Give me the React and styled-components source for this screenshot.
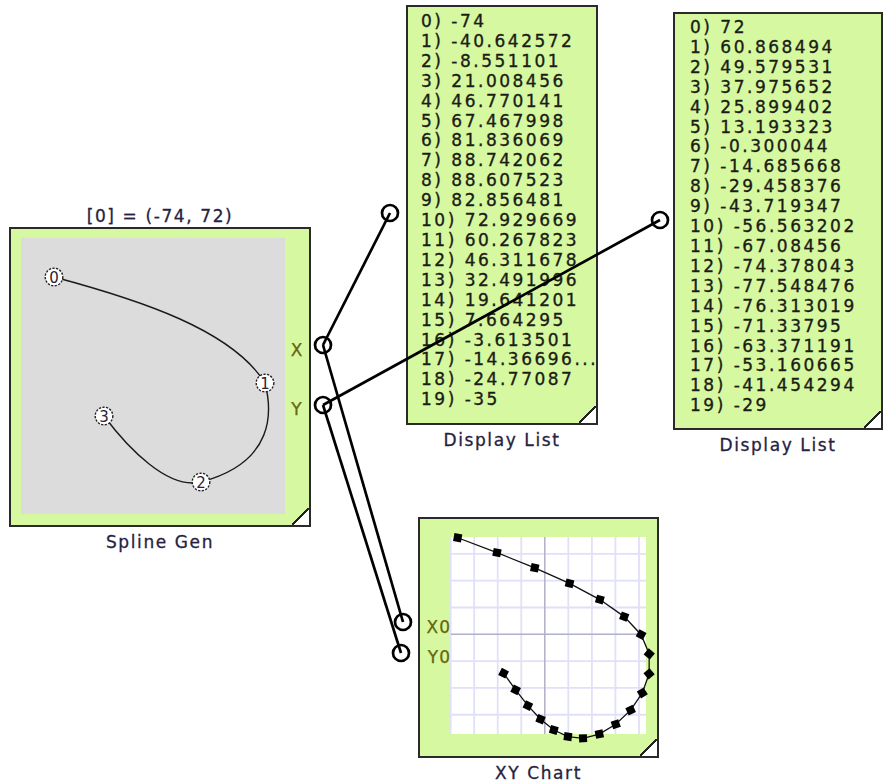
import React from 'react';
import styled, { createGlobalStyle } from 'styled-components';

const GlobalStyle = createGlobalStyle`
  html, body {
    margin: 0;
    padding: 0;
    background: #fff;
  }
  body {
    font-family: "DejaVu Sans", Verdana, sans-serif;
  }
`;

const GREEN = '#d5f8a1';
const INK = '#262240';
const OLIVE = '#66660e';

const xList = [
  '-74', '-40.642572', '-8.551101', '21.008456', '46.770141', '67.467998',
  '81.836069', '88.742062', '88.607523', '82.856481', '72.929669', '60.267823',
  '46.311678', '32.491996', '19.641201', '7.664295', '-3.613501', '-14.36696...',
  '-24.77087', '-35',
];

const yList = [
  '72', '60.868494', '49.579531', '37.975652', '25.899402', '13.193323',
  '-0.300044', '-14.685668', '-29.458376', '-43.719347', '-56.563202', '-67.08456',
  '-74.378043', '-77.548476', '-76.313019', '-71.33795', '-63.371191', '-53.160665',
  '-41.454294', '-29',
];

// chart scale (page coords)
const cx = (x) => 544.8 + x * 1.177;
const cy = (y) => 634.3 - y * 1.341;

const Canvas = styled.div`
  position: relative;
  width: 884px;
  height: 784px;
  overflow: hidden;
  background: #fff;
`;

const Node = styled.div`
  position: absolute;
  left: ${(p) => p.$x}px;
  top: ${(p) => p.$y}px;
  display: flex;
  flex-direction: column;
  align-items: center;
`;

const Caption = styled.div`
  height: 22px;
  line-height: 22px;
  font-size: 17px;
  letter-spacing: 1.6px;
  color: ${INK};
  white-space: nowrap;
  -webkit-text-stroke: 0.3px ${INK};
`;

const Label = styled(Caption)`
  padding-top: 4px;
`;

const Frame = styled.div`
  position: relative;
  box-sizing: border-box;
  width: ${(p) => p.$w}px;
  height: ${(p) => p.$h}px;
  padding: ${(p) => p.$pad};
  display: flex;
  flex-direction: ${(p) => (p.$col ? 'column' : 'row')};
  background: ${GREEN};
  border: 2px solid #2a2a2a;
`;

const Corner = styled.span`
  position: absolute;
  right: 0;
  bottom: 0;
  width: 17px;
  height: 17px;
  background: linear-gradient(
    to bottom right,
    transparent calc(50% - 1px),
    #222 calc(50% - 1px),
    #222 calc(50% + 1px),
    #fff calc(50% + 1px)
  );
`;

const SplineArea = styled.svg`
  display: block;
  background: #dcdcdc;
  flex: none;
`;

const PortColumn = styled.div`
  display: flex;
  flex-direction: column;
  align-items: ${(p) => p.$align || 'center'};
  width: ${(p) => p.$w}px;
  padding-top: ${(p) => p.$top}px;
  gap: ${(p) => p.$gap}px;
  flex: none;
  box-sizing: border-box;
`;

const PortLabel = styled.span`
  font-size: 17px;
  line-height: 22px;
  letter-spacing: 1px;
  color: ${OLIVE};
  -webkit-text-stroke: 0.25px ${OLIVE};
`;

const List = styled.div`
  font-size: 17px;
  line-height: 19.9px;
  letter-spacing: 2.5px;
  color: #1c1c14;
  white-space: pre;
  -webkit-text-stroke: 0.35px #1c1c14;
`;

const Plot = styled.svg`
  display: block;
  flex: none;
  overflow: visible;
`;

const Wires = styled.svg`
  position: absolute;
  left: 0;
  top: 0;
  pointer-events: none;
`;

const splinePoints = [
  { n: 0, x: 54, y: 277 },
  { n: 1, x: 265, y: 383 },
  { n: 2, x: 201, y: 482 },
  { n: 3, x: 104, y: 416 },
];

function SplineGen() {
  return (
    <Node $x={9} $y={205}>
      <Caption>[0] = (-74, 72)</Caption>
      <Frame $w={302} $h={300} $pad="9px 0 0 10px">
        <SplineArea width="264" height="276" viewBox="21 238 264 276">
          <path
            d="M54,277 C140,300 232,330 265,383 C272,410 276,462 201,482 C168,490 128,448 104,416"
            fill="none"
            stroke="#1a1a1a"
            strokeWidth="1.4"
          />
          {splinePoints.map((p) => (
            <g key={p.n}>
              <circle cx={p.x} cy={p.y} r="8.8" fill="#fff" stroke="#222" strokeWidth="1.4" strokeDasharray="2.2 1.4" />
              <text
                x={p.x}
                y={p.y + 5.5}
                textAnchor="middle"
                fontSize="15"
                fontFamily="DejaVu Sans, sans-serif"
                fill="#2a2430"
              >
                {p.n}
              </text>
            </g>
          ))}
        </SplineArea>
        <PortColumn $w={24} $top={101} $gap={37}>
          <PortLabel>X</PortLabel>
          <PortLabel>Y</PortLabel>
        </PortColumn>
        <Corner />
      </Frame>
      <Label>Spline Gen</Label>
    </Node>
  );
}

function DisplayList({ x, y, w, h, pad, values }) {
  return (
    <Node $x={x} $y={y}>
      <Frame $w={w} $h={h} $pad={pad} $col>
        <List>
          {values.map((v, i) => (
            <div key={i}>{`${i}) ${v}`}</div>
          ))}
        </List>
        <Corner />
      </Frame>
      <Label>Display List</Label>
    </Node>
  );
}

function XYChart() {
  const pts = xList.map((v, i) => [cx(parseFloat(v)), cy(parseFloat(yList[i]))]);
  const vLines = [-4, -3, -2, -1, 1, 2, 3, 4].map((k) => 544.8 + k * 23.54);
  const hLines = [-3, -2, -1, 1, 2, 3].map((k) => 634.3 + k * 26.82);
  const angle = (i) => {
    const a = pts[Math.max(0, i - 1)];
    const b = pts[Math.min(pts.length - 1, i + 1)];
    return (Math.atan2(b[1] - a[1], b[0] - a[0]) * 180) / Math.PI;
  };
  return (
    <Node $x={418} $y={517}>
      <Frame $w={241} $h={241} $pad="18px 0 0 0">
        <PortColumn $w={31} $top={79} $gap={8} $align="flex-end">
          <PortLabel>X0</PortLabel>
          <PortLabel>Y0</PortLabel>
        </PortColumn>
        <Plot width="195" height="197" viewBox="451 537 195 197">
          <rect x="451" y="537" width="195" height="197" fill="#fff" />
          {vLines.map((lx) => (
            <line key={lx} x1={lx} y1="537" x2={lx} y2="734" stroke="#e0e0f8" strokeWidth="1.8" />
          ))}
          {hLines.map((ly) => (
            <line key={ly} x1="451" y1={ly} x2="646" y2={ly} stroke="#e0e0f8" strokeWidth="1.8" />
          ))}
          <line x1="544.8" y1="537" x2="544.8" y2="734" stroke="#b0b0c6" strokeWidth="1.5" />
          <line x1="451" y1="634.3" x2="646" y2="634.3" stroke="#b0b0c6" strokeWidth="1.5" />
          <polyline
            points={pts.map((p) => p.join(',')).join(' ')}
            fill="none"
            stroke="#111"
            strokeWidth="1.3"
          />
          {pts.map(([px, py], i) => (
            <rect
              key={i}
              x={px - 4}
              y={py - 4}
              width="8"
              height="8"
              fill="#000"
              transform={`rotate(${angle(i) * 0.5} ${px} ${py})`}
            />
          ))}
        </Plot>
        <Corner />
      </Frame>
      <Label>XY Chart</Label>
    </Node>
  );
}

const wires = [
  [323, 345, 390, 213],
  [323, 405, 660, 220],
  [323, 345, 403, 622],
  [323, 405, 401, 653],
];

const ports = [
  [323, 345],
  [323, 405],
  [390, 213],
  [660, 220],
  [403, 622],
  [401, 653],
];

export default function App() {
  return (
    <Canvas>
      <GlobalStyle />
      <SplineGen />
      <DisplayList x={406} y={5} w={192} h={420} pad="5px 0 0 13px" values={xList} />
      <DisplayList x={673} y={12} w={210} h={418} pad="4px 0 0 15px" values={yList} />
      <XYChart />
      <Wires width="884" height="784" viewBox="0 0 884 784">
        {wires.map(([x1, y1, x2, y2], i) => (
          <line key={i} x1={x1} y1={y1} x2={x2} y2={y2} stroke="#000" strokeWidth="2.7" />
        ))}
        {ports.map(([px, py], i) => (
          <circle key={i} cx={px} cy={py} r="8" fill="none" stroke="#000" strokeWidth="2.7" />
        ))}
      </Wires>
    </Canvas>
  );
}
